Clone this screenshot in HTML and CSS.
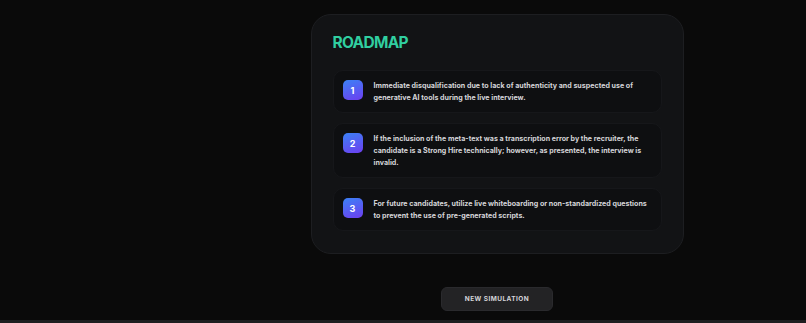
FILE: index.html
```html
<!DOCTYPE html>
<html lang="en">
<head>
  <meta charset="UTF-8">
  <title>Roadmap</title>
  <link rel="stylesheet" href="styles.css">
</head>
<body>
  <div class="layout">
    <aside class="side"></aside>
    <main class="main">
      <section class="roadmap-card">
        <h2 class="roadmap-title">ROADMAP</h2>
        <ol class="steps">
          <li class="step">
            <span class="step-num">1</span>
            <p>Immediate disqualification due to lack of authenticity and suspected use of generative AI tools during the live interview.</p>
          </li>
          <li class="step">
            <span class="step-num">2</span>
            <p>If the inclusion of the meta-text was a transcription error by the recruiter, the candidate is a Strong Hire technically; however, as presented, the interview is invalid.</p>
          </li>
          <li class="step">
            <span class="step-num">3</span>
            <p>For future candidates, utilize live whiteboarding or non-standardized questions to prevent the use of pre-generated scripts.</p>
          </li>
        </ol>
      </section>
      <button class="new-sim">NEW SIMULATION</button>
    </main>
  </div>
  <footer class="bottom-bar"></footer>
</body>
</html>
```

FILE: styles.css
```css
body {
  margin: 0;
  background: #0a0a0a;
  font-family: Inter, "Noto Sans", sans-serif;
  color: #d4d4d8;
  height: 323px;
  overflow: hidden;
  display: flex;
  flex-direction: column;
}

.layout {
  display: grid;
  grid-template-columns: 188px 1fr;
  flex: 1;
}

.main {
  display: flex;
  flex-direction: column;
  align-items: center;
  padding-top: 14px;
}

.roadmap-card {
  width: 373px;
  box-sizing: border-box;
  background: #121315;
  border: 1px solid #1d1e21;
  border-radius: 20px;
  padding: 17px 21px 22px;
}

.roadmap-title {
  margin: 0 0 16px;
  font-size: 15.5px;
  line-height: 22px;
  font-weight: 700;
  letter-spacing: -0.7px;
  color: #30cfa0;
}

.steps {
  list-style: none;
  margin: 0;
  padding: 0;
  display: flex;
  flex-direction: column;
  gap: 10px;
}

.step {
  display: flex;
  gap: 11px;
  align-items: flex-start;
  background: #0e0f11;
  border: 1px solid #16171a;
  border-radius: 10px;
  padding: 9px 7px 8px 9px;
}

.step-num {
  flex: none;
  width: 20px;
  height: 20px;
  border-radius: 5px;
  background: linear-gradient(160deg, #3b82f6, #6d3ef0);
  color: #fff;
  font-size: 9px;
  font-weight: 700;
  display: flex;
  align-items: center;
  justify-content: center;
}

.step p {
  margin: 0;
  font-size: 7.1px;
  line-height: 12px;
  font-weight: 700;
  color: #d4d4d8;
}

.new-sim {
  margin-top: 33px;
  width: 112px;
  height: 24px;
  border: 1px solid #2a2a2d;
  border-radius: 6px;
  background: #232325;
  color: #d4d4d8;
  font-family: Inter, "Noto Sans", sans-serif;
  font-size: 6.5px;
  font-weight: 700;
  letter-spacing: 0.45px;
}

.bottom-bar {
  height: 3px;
  background: #1e1e20;
}
```
